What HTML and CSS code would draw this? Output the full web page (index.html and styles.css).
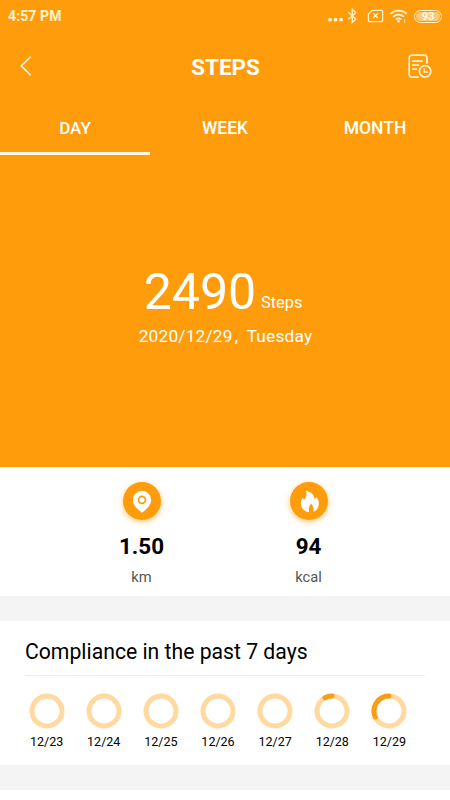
FILE: index.html
```html
<!DOCTYPE html>
<html lang="en">
<head>
<meta charset="utf-8">
<title>Steps</title>
<link rel="stylesheet" href="styles.css">
</head>
<body>
<section class="hero">
  <div class="status">
    <span class="clock">4:57 PM</span>
    <svg class="status-icons" width="87" height="20" viewBox="0 0 87 20" fill="none" stroke="currentColor" stroke-width="1.3">
      <g fill="currentColor" stroke="none"><circle cx="3" cy="14.7" r="1.9"/><circle cx="8.5" cy="14.7" r="1.9"/><circle cx="14" cy="14.7" r="1.9"/></g>
      <path d="M21.4 7.2l7.4 6.8-3.6 3.4V4.2l3.6 3.4-7.4 6.6"/>
      <path d="M45.3 5.4h9.3a1 1 0 0 1 1 1v9.2a1 1 0 0 1-1 1H42.4a1 1 0 0 1-1-1V9.1z"/>
      <path d="M46.2 8.4l4.6 4.6m0-4.6L46.2 13"/>
      <g stroke-width="1.8"><path d="M63.4 8.8a12 12 0 0 1 16.4 0M66.2 11.8a8 8 0 0 1 10.8 0M68.9 14.5a4.2 4.2 0 0 1 5.4 0"/></g>
      <circle cx="71.6" cy="16.2" r="1.3" fill="currentColor" stroke="none"/>
      <path d="M77.6 14.5v3.2" stroke-width="1"/>
    </svg>
    <span class="battery"><span class="charge">93</span></span>
  </div>
  <header class="bar">
    <svg class="back" width="12" height="20" viewBox="0 0 12 20" fill="none" stroke="currentColor" stroke-width="1.5"><path d="M10.7.7L1.2 9.9l9.5 9.4"/></svg>
    <h1>STEPS</h1>
    <svg class="report" width="24" height="25" viewBox="0 0 24 25" fill="none" stroke="currentColor" stroke-width="1.7" stroke-linecap="round">
      <path d="M18.9 9V4a2.8 2.8 0 0 0-2.8-2.8H4A2.8 2.8 0 0 0 1.2 4v16.4A2.8 2.8 0 0 0 4 23.2h6"/>
      <path d="M4.8 7.2h9.3M4.8 11.2h5.6M4.8 15.1h3.5"/>
      <circle cx="17.1" cy="17.3" r="5.7"/><path d="M16.2 15v3h3.2" stroke-width="1.4"/>
    </svg>
  </header>
  <nav class="tabs"><span class="tab active">DAY</span><span class="tab">WEEK</span><span class="tab">MONTH</span></nav>
  <div class="total"><span class="count">2490</span><span class="unit">Steps</span></div>
  <div class="date"><span>2020/12/29</span><span class="comma">,</span><span>Tuesday</span></div>
</section>
<section class="stats">
  <div class="stat">
    <span class="badge"><svg width="38" height="38" viewBox="0 0 38 38"><path fill="#fff" d="M19 8.8a9.2 9.2 0 0 0-9.2 9.2c0 4.8 4.5 9.2 9.2 12.8 4.7-3.6 9.2-8 9.2-12.8A9.2 9.2 0 0 0 19 8.8z"/><circle cx="19" cy="17.8" r="3.5" fill="none" stroke="#ff9c0c" stroke-width="1.7"/></svg></span>
    <b>1.50</b><small>km</small>
  </div>
  <div class="stat">
    <span class="badge"><svg width="38" height="38" viewBox="0 0 38 38"><path fill="#fff" d="M15.9 8.6c5.6 1.6 8.2 4.4 8.6 8.3.9-.5 1.4-1.1 1.7-1.9 2 2 2.8 4.6 2.6 7.2-.3 3.9-2.4 6.5-5.4 7.6.5-3.4-.3-5.9-2.1-8-2.4 2.1-3 4.7-2.2 8.4-4.7-.6-8.1-3.8-8.2-8.1-.1-2.5.5-4.4 1.4-6 .8.5 1.3 1.1 1.7 1.9 2.4-2.6 3-5.5 1.9-9.4z"/></svg></span>
    <b>94</b><small>kcal</small>
  </div>
</section>
<section class="compliance">
  <h2>Compliance in the past 7 days</h2>
  <div class="days">
    <div class="day"><svg class="ring" viewBox="0 0 36 36"><circle cx="18" cy="18" r="15"/></svg><span>12/23</span></div>
    <div class="day"><svg class="ring" viewBox="0 0 36 36"><circle cx="18" cy="18" r="15"/></svg><span>12/24</span></div>
    <div class="day"><svg class="ring" viewBox="0 0 36 36"><circle cx="18" cy="18" r="15"/></svg><span>12/25</span></div>
    <div class="day"><svg class="ring" viewBox="0 0 36 36"><circle cx="18" cy="18" r="15"/></svg><span>12/26</span></div>
    <div class="day"><svg class="ring" viewBox="0 0 36 36"><circle cx="18" cy="18" r="15"/></svg><span>12/27</span></div>
    <div class="day"><svg class="ring" viewBox="0 0 36 36"><circle cx="18" cy="18" r="15"/><path class="done" d="M18 3a15 15 0 0 0-7 1.7"/></svg><span>12/28</span></div>
    <div class="day"><svg class="ring" viewBox="0 0 36 36"><circle cx="18" cy="18" r="15"/><path class="done" d="M18 3A15 15 0 0 0 4.2 23.9"/></svg><span>12/29</span></div>
  </div>
</section>
</body>
</html>
```
FILE: styles.css
```css
* { box-sizing: border-box; }
body { margin: 0; width: 450px; height: 800px; overflow: hidden; background: #fff; font-family: Roboto, "Liberation Sans", sans-serif; color: #000; }
svg { display: block; }
.hero { height: 467px; background: #ff9c0c; color: #fff; }
.status { height: 32px; padding: 0 8px; display: flex; align-items: center; color: #fff2cf; }
.clock { flex: 1; font-size: 14px; font-weight: 700; letter-spacing: .1px; }
.status-icons { flex: none; margin-top: -2px; }
.battery { width: 28px; height: 13px; border: 1px solid; border-radius: 7px; padding: 1px; }
.charge { display: block; height: 9px; border-radius: 5px; background: #ffc877; font-size: 11px; line-height: 9px; font-weight: 700; text-align: center; color: #fffbe9; }
.bar { height: 70px; padding: 0 18px 2px 20px; display: grid; grid-template-columns: 24px 1fr 24px; align-items: center; }
.back { color: #fff7e0; }
h1 { margin: 3px 0 0; padding-right: 1px; font-size: 22.4px; line-height: 29px; font-weight: 700; text-align: center; }
.report { color: #fff2cf; }
.tabs { height: 53px; display: grid; grid-template-columns: repeat(3, 1fr); }
.tab { height: 53px; text-align: center; font-size: 17.5px; line-height: 53px; font-weight: 500; }
.active { border-bottom: 3px solid #fff7e6; font-size: 17px; }
.total { height: 60px; margin-top: 107px; display: flex; justify-content: center; align-items: baseline; gap: 5px; padding-right: 4px; }
.count { font-size: 50px; line-height: 60px; }
.unit { font-size: 16.3px; transform: translateY(-1px); }
.date { height: 24px; margin-top: 2px; display: flex; justify-content: center; font-size: 17.3px; line-height: 24px; letter-spacing: .2px; padding-left: 1px; }
.comma { width: 14px; padding-left: 2px; }
.stats { height: 129px; padding: 0 58px; display: grid; grid-template-columns: repeat(2, 167px); }
.stat { display: flex; flex-direction: column; align-items: center; padding-top: 15px; }
.badge { width: 38px; height: 38px; border-radius: 50%; background: #ff9c0c; box-shadow: 0 2px 6px #ffca80; }
.stat b { margin-top: 12px; font-size: 22.4px; line-height: 29px; font-weight: 700; }
.stat small { margin-top: 6px; font-size: 14.7px; line-height: 20px; color: #555; }
.compliance { height: 194px; border: solid #f4f4f4; border-width: 25px 0; padding: 0 25px; }
h2 { margin: 0; height: 55px; border-bottom: 1px solid #eee; font-size: 21.2px; line-height: 62px; font-weight: 400; }
.days { margin: 17px 0 0 -7px; width: 400px; display: grid; grid-template-columns: repeat(7, 1fr); }
.day { display: flex; flex-direction: column; align-items: center; font-size: 12.5px; line-height: 16px; gap: 5px; }
.ring { width: 36px; height: 36px; fill: none; stroke: #ffd9a0; stroke-width: 5; }
.done { stroke: #fb9d14; stroke-linecap: round; }
```
